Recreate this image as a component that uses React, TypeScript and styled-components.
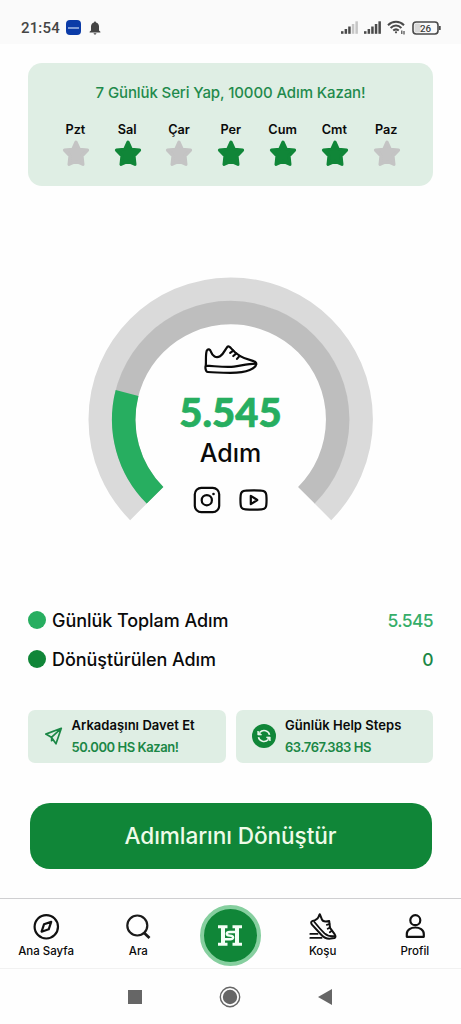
import React from "react";
import styled, { createGlobalStyle } from "styled-components";

const GREEN = "#108638";
const BRIGHT = "#27ae60";
const MINT = "#dfeee4";

const GlobalStyle = createGlobalStyle`
  * { box-sizing: border-box; }
  body {
    margin: 0;
    background: #fefefe;
    font-family: Inter, "Noto Sans", sans-serif;
    color: #0a0a0a;
  }
  svg { display: block; flex: none; }
`;

const Screen = styled.div`
  width: 461px;
  height: 1024px;
  display: flex;
  flex-direction: column;
  overflow: hidden;
`;

const StatusBar = styled.header`
  height: 44px;
  padding: 11px 19px 0 21px;
  display: flex;
  align-items: center;
  background: #fafafa;
  color: #454545;
`;

const Clock = styled.span`
  width: 39px;
  font: 500 15px/20px Roboto, sans-serif;
  letter-spacing: 0.15px;
  white-space: nowrap;
`;

const AppBadge = styled.span`
  width: 15px;
  height: 15px;
  margin: 0 8px 0 6px;
  border-radius: 4px;
  background: #0b3ba7;
  display: flex;
  align-items: center;
  justify-content: center;
  &::after {
    content: "";
    width: 11px;
    height: 2px;
    background: #7d9ad6;
  }
`;

const StatusIcons = styled.div`
  margin-left: auto;
  display: flex;
  align-items: center;
  gap: 6px;
`;

const Content = styled.main`
  flex: 1;
  padding: 19px 28px 0;
  display: flex;
  flex-direction: column;
`;

const StreakCard = styled.section`
  height: 123px;
  padding: 17.5px 22px 0;
  border-radius: 14px;
  background: ${MINT};
`;

const StreakTitle = styled.h1`
  margin: 0;
  text-align: center;
  font-size: 15px;
  font-weight: 500;
  line-height: 24px;
  letter-spacing: -0.11px;
  color: #1f8a4c;
  white-space: nowrap;
`;

const Days = styled.div`
  margin-top: 15.5px;
  display: grid;
  grid-template-columns: repeat(7, 51.8px);
`;

const Day = styled.div`
  display: flex;
  flex-direction: column;
  align-items: center;
  font-size: 12.7px;
  font-weight: 600;
  line-height: 20px;
`;

const DayName = styled.span`
  margin-right: 1px;
`;

const Gauge = styled.section`
  align-self: center;
  width: 286px;
  height: 246px;
  margin-top: 91px;
  display: grid;
  > * { grid-area: 1 / 1; }
`;

const GaugeBody = styled.div`
  display: flex;
  flex-direction: column;
  align-items: center;
  padding-top: 68px;
`;

const StepCount = styled.strong`
  margin-top: 15px;
  font-family: Lato, "Noto Sans", sans-serif;
  font-size: 40px;
  font-weight: 900;
  line-height: 44px;
  color: ${BRIGHT};
  -webkit-text-stroke: 0.7px ${BRIGHT};
`;

const StepLabel = styled.span`
  margin-top: 4px;
  font-size: 25px;
  font-weight: 500;
  line-height: 30px;
`;

const Socials = styled.div`
  margin-top: 18px;
  display: flex;
  align-items: center;
  gap: 18px;
`;

const Totals = styled.section`
  margin-top: 77.5px;
  display: flex;
  flex-direction: column;
`;

const TotalRow = styled.div<{ $dot: string }>`
  height: 39px;
  display: flex;
  align-items: center;
  font-size: 18px;
  font-weight: 500;
  letter-spacing: -0.06px;
  white-space: nowrap;
  &::before {
    content: "";
    width: 18px;
    height: 18px;
    margin-right: 6px;
    border-radius: 50%;
    background: ${(p) => p.$dot};
  }
`;

const TotalValue = styled.span<{ $color: string }>`
  margin-left: auto;
  font-size: 17.5px;
  letter-spacing: -0.6px;
  color: ${(p) => p.$color};
`;

const Tiles = styled.section`
  margin-top: 31px;
  display: grid;
  grid-template-columns: 1fr 1fr;
  gap: 10px;
`;

const Tile = styled.div`
  height: 53px;
  padding: 0 0 1px 16.5px;
  display: flex;
  align-items: center;
  gap: 9px;
  border-radius: 7px;
  background: ${MINT};
`;

const TileText = styled.div`
  display: flex;
  flex-direction: column;
  font-size: 13px;
  font-weight: 600;
  line-height: 22px;
  white-space: nowrap;
`;

const TileTitle = styled.span`
  letter-spacing: 0.04px;
`;

const TileValue = styled.span`
  color: #1b8746;
  letter-spacing: -0.45px;
`;

const ConvertButton = styled.button`
  height: 66px;
  margin: 40.5px 1.5px 0;
  padding: 0;
  border: 0;
  border-radius: 20px;
  background: ${GREEN};
  color: #eefbe8;
  font: 500 22.6px/30px Inter, "Noto Sans", sans-serif;
  letter-spacing: -0.08px;
`;

const TabBar = styled.nav`
  height: 71px;
  border-top: 1px solid #cfcfd1;
  border-bottom: 1px solid #f1f1f1;
  display: grid;
  grid-template-columns: repeat(5, 92.2px);
`;

const Tab = styled.div`
  display: flex;
  flex-direction: column;
  align-items: center;
  padding-top: 14px;
  gap: 1.5px;
  font-size: 11.5px;
  font-weight: 500;
  line-height: 16px;
`;

const CenterTab = styled.div`
  width: 61px;
  height: 61px;
  margin-top: 6px;
  justify-self: center;
  border: 4px solid #86cf9f;
  border-radius: 50%;
  background: ${GREEN};
  display: flex;
  align-items: center;
  justify-content: center;
`;

const SystemBar = styled.footer`
  height: 55px;
  padding-right: 1px;
  display: flex;
  align-items: center;
  justify-content: center;
  gap: 77px;
`;

const Star = ({ on }: { on: boolean }) => (
  <svg width="28" height="27" viewBox="0 0 28 27">
    <path
      d="M14 2 17.400 9.300 25.600 10.100 20.100 15.900 21 24.400 14 21.300 7 24.400 7.900 15.900 2.400 10.100 10.600 9.300Z"
      fill={on ? GREEN : "#c4c4c4"}
      stroke={on ? GREEN : "#c4c4c4"}
      strokeWidth="3"
      strokeLinejoin="round"
    />
  </svg>
);

const Bell = () => (
  <svg width="12" height="14" viewBox="0 0 12 14" fill="#454545">
    <path d="M6 0.4C6.7.4 7 .9 7 1.5 9 2 10 3.700 10 5.600V9.400L11.400 10.800V11.500H.6V10.800L2 9.400V5.600C2 3.700 3 2 5 1.500 5 .9 5.300.4 6 .4ZM4.600 12.200H7.400C7.400 13.900 4.600 13.900 4.600 12.200Z" />
  </svg>
);

const Signal = ({ bars }: { bars: number }) => (
  <svg width="17" height="13" viewBox="0 0 17 13">
    {[0, 1, 2, 3, 4].map((i) => (
      <rect
        key={i}
        x={i * 3.600}
        y={[10.200, 8, 5.500, 3, 0.300][i]}
        width="2.500"
        height={[2.600, 4.800, 7.300, 9.800, 12.500][i]}
        fill={i < bars ? "#4a4a4a" : "#c6c6c6"}
      />
    ))}
  </svg>
);

const Wifi = () => (
  <svg width="19" height="15" viewBox="0 0 19 15" fill="none" stroke="#4a4a4a" strokeWidth="2">
    <path d="M1 5.200C5.500.6 12.500.6 17 5.200M3.600 8C7 4.600 11 4.600 14.400 8M6.200 10.600C8 9 10 9 11.800 10.600" />
    <circle cx="9" cy="12.300" r="1.100" fill="#4a4a4a" stroke="none" />
    <path d="M14.800 10.500V14M17 11V14.500" strokeWidth="1.200" />
  </svg>
);

const Battery = () => (
  <svg width="30" height="14" viewBox="0 0 30 14">
    <rect x="1" y="1" width="25" height="12" rx="3.200" fill="#fafafa" stroke="#4a4a4a" strokeWidth="1.600" />
    <rect x="2.500" y="2.500" width="6" height="9" rx="1.500" fill="#d8d8d8" />
    <path d="M27.800 5V9" stroke="#4a4a4a" strokeWidth="1.800" />
    <text x="13.500" y="10.600" textAnchor="middle" fontFamily="Roboto, sans-serif" fontSize="9.800" fontWeight="500" fill="#3e3e3e">
      26
    </text>
  </svg>
);

const arc = (r: number, from: number, to: number) => {
  const pt = (a: number) => {
    const t = (a * Math.PI) / 180;
    return `${142.700 + r * Math.cos(t)} ${142.600 + r * Math.sin(t)}`;
  };
  return `M${pt(from)}A${r} ${r} 0 ${to - from > 180 ? 1 : 0} 1 ${pt(to)}`;
};

const Rings = () => (
  <svg width="286" height="246" viewBox="0 0 286 246" fill="none">
    <path d={arc(130.200, 135, 405)} stroke="#dadada" strokeWidth="24" />
    <path d={arc(107, 135, 405)} stroke="#bebebe" strokeWidth="23.500" />
    <path d={arc(107, 135, 194.400)} stroke="#27ae60" strokeWidth="23.500" />
  </svg>
);

const Shoe = () => (
  <svg width="54" height="30" viewBox="0 0 54 30" fill="none" stroke="#0a0a0a" strokeWidth="2.200" strokeLinecap="round" strokeLinejoin="round">
    <path d="M1.800 20.500C2.200 15 1.500 9 2.700 5.800 4 3.400 6.100 4.200 7 6.800 8.500 11 12 13.600 16.100 11.200 19.800 9 21 4.400 23.300 1.900 24.600.7 26 2 27.400 3.600 32.500 9.700 40 13.600 46.500 15.100 50.600 16.100 52.600 17 52.300 19.300 51.800 22 49.300 23.500 45.700 25 39.600 27.600 34 27.800 26.500 27.800 18 27.800 9.300 27.600 3.800 27 1.400 26.700 1.100 22 1.800 20.500ZM1.800 20.700C12 21.200 22 22.500 30 21.600 37 20.800 43 18.800 52 18.700" />
    <path d="M29.300 5.600 26.200 7.800M32.300 8.400 29.300 11M35.600 10.900 33 13.900" />
  </svg>
);

const Instagram = () => (
  <svg width="28" height="28" viewBox="0 0 28 28" fill="none" stroke="#0a0a0a" strokeWidth="2.200">
    <rect x="1.800" y="1.800" width="24.400" height="24.400" rx="6.500" />
    <circle cx="13.800" cy="14.200" r="5.100" />
    <circle cx="20.500" cy="8" r="1.300" fill="#0a0a0a" stroke="none" />
  </svg>
);

const Youtube = () => (
  <svg width="29" height="22" viewBox="0 0 29 22" fill="none" stroke="#0a0a0a" strokeWidth="2.200" strokeLinejoin="round">
    <path d="M6.500 1.600Q14.500 1 22.500 1.600 27 1.800 27.300 6 27.800 11 27.300 16 27 20.200 22.500 20.400 14.500 21 6.500 20.400 2 20.200 1.700 16 1.200 11 1.700 6 2 1.800 6.500 1.600Z" />
    <path d="M11.800 6.800V15.200L18.300 11Z" />
  </svg>
);

const Plane = () => (
  <svg width="18" height="18" viewBox="0 0 18 18" fill="none" stroke="#1b8746" strokeWidth="1.700" strokeLinejoin="round">
    <path d="M16.300 1.300 .8 7.100 6.400 10.300 11 16.800ZM6.400 10.300 16.300 1.300" />
    <path d="M6.400 10.300V14L8.500 13" strokeWidth="1.200" />
  </svg>
);

const Refresh = () => (
  <svg width="24" height="24" viewBox="0 0 24 24" fill="none" stroke="#e6f5ea" strokeWidth="1.600" strokeLinejoin="round">
    <circle cx="12" cy="12" r="12" fill={GREEN} stroke="none" />
    <path d="M17.500 10.800C16.800 6.500 11 5 7.800 8.400M6.500 13.200C7.200 17.500 13 19 16.200 15.600" />
    <path d="M5.800 7V10.900H9.600ZM18.200 17V13.100H14.400Z" fill="#e6f5ea" strokeWidth=".8" />
  </svg>
);

const Compass = () => (
  <svg width="28" height="28" viewBox="0 0 28 28" fill="none" stroke="#111" strokeWidth="2.200" strokeLinejoin="round">
    <circle cx="14.300" cy="13.800" r="11.700" />
    <path d="M19.200 8.900 12 11.300 9.600 18.700 16.700 16.300Z" strokeWidth="2.200" />
  </svg>
);

const Search = () => (
  <svg width="28" height="28" viewBox="0 0 28 28" fill="none" stroke="#1b1b1b" strokeWidth="2.200">
    <circle cx="13.300" cy="12.500" r="10" />
    <path d="M20 19.800 25.500 25" strokeWidth="2.800" />
  </svg>
);

const RunShoe = () => (
  <svg width="28" height="28" viewBox="0 0 28 28" fill="none" stroke="#111" strokeWidth="2" strokeLinejoin="round" strokeLinecap="round">
    <path d="M10.800 1.200C9.800 2.200 10.200 4 8.500 5.500 6.800 7 5 8 3.300 8 1.500 9 2.200 10.600 3.200 11.900L12.500 22C15.500 25.300 18.500 25.900 21.500 25.600L25.500 25C27 24.300 26.500 22.600 25.600 21.200L21 14.800 20.200 8C16.500 9 13.300 8.200 12.600 5.700Z" />
    <path d="M5.200 8.800C8.500 13 12 17 15.500 20.300 18.500 23 21.500 23.500 25.500 23.200" strokeWidth="1.800" />
    <path d="M20.500 11 17.800 11.800M21 14.500 18.700 15.700M22.800 17.800 20.800 19.200M1.300 20.900H8.500M1.300 24.900H12.500" strokeWidth="1.800" />
  </svg>
);

const Person = () => (
  <svg width="28" height="28" viewBox="0 0 28 28" fill="none" stroke="#111" strokeWidth="2.200" strokeLinejoin="round">
    <circle cx="14.300" cy="7.200" r="5" />
    <path d="M5.800 23.800V21C5.800 12.300 22.800 12.300 22.800 21V23.800Z" />
  </svg>
);

const Logo = () => (
  <svg width="24" height="21" viewBox="0 0 24 21" fill="none" stroke="#f2fff5">
    <path d="M0 1.700H9.500M14.500 1.700H24M0 19.300H9.500M14.500 19.300H24" strokeWidth="3" />
    <path d="M5 1V20M19 1V20" strokeWidth="4" />
    <path d="M19 7H11.700C7.800 7 7.800 10.600 11.700 10.600 16.200 10.600 16.200 14.200 12.200 14.200H5" strokeWidth="2.400" />
  </svg>
);

const week: [string, boolean][] = [
  ["Pzt", false],
  ["Sal", true],
  ["Çar", false],
  ["Per", true],
  ["Cum", true],
  ["Cmt", true],
  ["Paz", false],
];

export default function App() {
  return (
    <Screen>
      <GlobalStyle />
      <StatusBar>
        <Clock>21:54</Clock>
        <AppBadge />
        <Bell />
        <StatusIcons>
          <Signal bars={3} />
          <Signal bars={5} />
          <Wifi />
          <Battery />
        </StatusIcons>
      </StatusBar>
      <Content>
        <StreakCard>
          <StreakTitle>7 Günlük Seri Yap, 10000 Adım Kazan!</StreakTitle>
          <Days>
            {week.map(([name, on]) => (
              <Day key={name}>
                <DayName>{name}</DayName>
                <Star on={on} />
              </Day>
            ))}
          </Days>
        </StreakCard>
        <Gauge>
          <Rings />
          <GaugeBody>
            <Shoe />
            <StepCount>5.545</StepCount>
            <StepLabel>Adım</StepLabel>
            <Socials>
              <Instagram />
              <Youtube />
            </Socials>
          </GaugeBody>
        </Gauge>
        <Totals>
          <TotalRow $dot={BRIGHT}>
            Günlük Toplam Adım
            <TotalValue $color="#35ad68">5.545</TotalValue>
          </TotalRow>
          <TotalRow $dot={GREEN}>
            Dönüştürülen Adım
            <TotalValue $color="#1b8746">0</TotalValue>
          </TotalRow>
        </Totals>
        <Tiles>
          <Tile>
            <Plane />
            <TileText>
              <TileTitle>Arkadaşını Davet Et</TileTitle>
              <TileValue>50.000 HS Kazan!</TileValue>
            </TileText>
          </Tile>
          <Tile>
            <Refresh />
            <TileText>
              <TileTitle>Günlük Help Steps</TileTitle>
              <TileValue>63.767.383 HS</TileValue>
            </TileText>
          </Tile>
        </Tiles>
        <ConvertButton>Adımlarını Dönüştür</ConvertButton>
      </Content>
      <TabBar>
        <Tab>
          <Compass />
          Ana Sayfa
        </Tab>
        <Tab>
          <Search />
          Ara
        </Tab>
        <CenterTab>
          <Logo />
        </CenterTab>
        <Tab>
          <RunShoe />
          Koşu
        </Tab>
        <Tab>
          <Person />
          Profil
        </Tab>
      </TabBar>
      <SystemBar>
        <svg width="14" height="14" viewBox="0 0 14 14">
          <rect width="14" height="14" fill="#666" />
        </svg>
        <svg width="22" height="22" viewBox="0 0 22 22">
          <circle cx="11" cy="11" r="9.700" fill="none" stroke="#666" strokeWidth="1.400" />
          <circle cx="11" cy="11" r="7.200" fill="#666" />
        </svg>
        <svg width="14" height="16" viewBox="0 0 14 16">
          <path d="M0 8 14 0V16Z" fill="#666" />
        </svg>
      </SystemBar>
    </Screen>
  );
}
